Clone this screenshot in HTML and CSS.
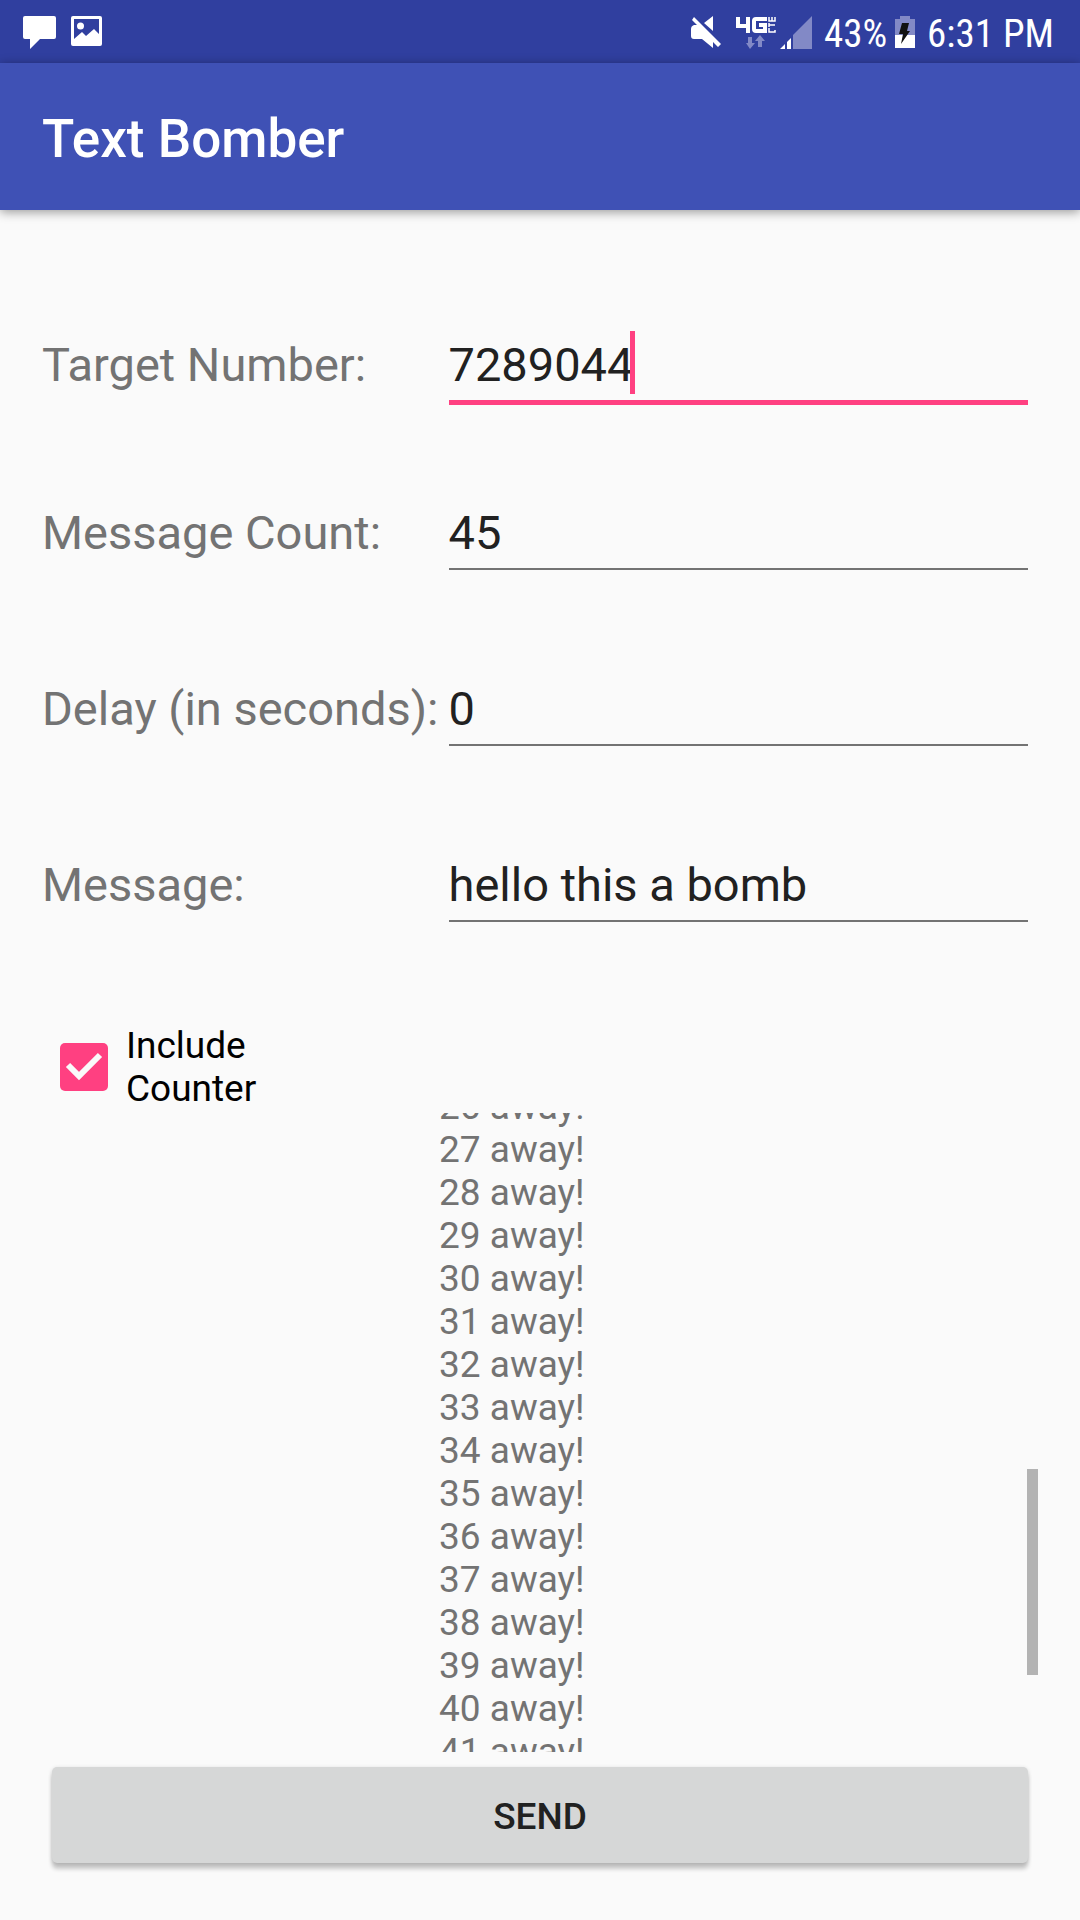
FILE: index.html
```html
<!DOCTYPE html>
<html lang="en">
<head>
<meta charset="utf-8">
<meta name="viewport" content="width=device-width, initial-scale=1">
<title>Text Bomber</title>
<link rel="stylesheet" href="styles.css">
</head>
<body>
<div class="status-bar">
  <div class="status-group notifications">
    <svg class="icon-chat" width="33" height="33" viewBox="0 0 33 33" aria-hidden="true"><path fill="#fff" d="M2 0h29q2 0 2 2v19q0 2-2 2H17L7 33V23H2q-2 0-2-2V2q0-2 2-2z"/></svg>
    <svg class="icon-image" width="31" height="33" viewBox="0 0 31 33" aria-hidden="true"><path fill="#fff" fill-rule="evenodd" d="M2 0h27q2 0 2 2v26q0 2-2 2H2q-2 0-2-2V2q0-2 2-2zM3 3v20l8-7 4 4 8-7 5 5V3z"/><circle cx="9.500" cy="10" r="3.500" fill="#fff"/></svg>
  </div>
  <div class="status-group system">
    <svg class="icon-mute" width="31" height="33" viewBox="0 0 31 33" aria-hidden="true"><path fill="#fff" d="M22 0v15L13 7zM3 1l27 27-3 3-5-5v6L11 23H3q-3 0-3-3v-7q0-3 3-4h3L1 4z"/></svg>
    <svg class="icon-network" width="40" height="33" viewBox="0 0 40 33" aria-hidden="true"><path fill="none" stroke="#fff" stroke-width="4" d="M2 1v9h12M12 1v16M31 3H20q-2 0-2 2v8q0 2 2 2h9V9h-6"/><path fill="none" stroke="#fff" stroke-width="1.500" d="M33 12v4h6v-2M33 9h6M33 7v4M33 1v4h6V1M36 1v4"/><path fill="#8289c6" d="M12 21h4v6h3l-5 6-4-6h2zM24 19l5 6h-3v6h-4v-6h-3z"/></svg>
    <svg class="icon-signal" width="32" height="33" viewBox="0 0 32 33" aria-hidden="true"><path fill="#8289c6" d="M13 19L32 0v33H13z"/><path fill="#fff" d="M0 33l5-5v5zM7 26l4-4v11H7z"/></svg>
    <span class="status-text battery-level">43%</span>
    <svg class="icon-battery" width="20" height="33" viewBox="0 0 20 33" aria-hidden="true"><path fill="#8289c6" d="M0 3h5V0h10v3h5v16H0z"/><path fill="#fff" d="M0 19h20v13H0z"/><path fill="#111" d="M7 7h7l-2 8h3L6 28l2-10H4z"/></svg>
    <time class="status-text">6:31 PM</time>
  </div>
</div>
<header class="app-bar">
  <h1 class="app-title">Text Bomber</h1>
</header>
<main class="content">
  <form class="form">
    <div class="fields">
      <label class="field-label" for="target">Target Number:</label>
      <div class="field field-focused">
        <input class="field-input" id="target" type="text" inputmode="tel" value="7289044">
        <span class="caret"></span>
      </div>
      <label class="field-label" for="count">Message Count:</label>
      <div class="field"><input class="field-input" id="count" type="text" inputmode="numeric" value="45"></div>
      <label class="field-label" for="delay">Delay (in seconds):</label>
      <div class="field"><input class="field-input" id="delay" type="text" inputmode="numeric" value="0"></div>
      <label class="field-label" for="message">Message:</label>
      <div class="field"><input class="field-input" id="message" type="text" value="hello this a bomb"></div>
    </div>
    <div class="option">
      <span class="check">
        <input class="check-box" id="counter" type="checkbox" checked>
        <svg class="check-mark" width="48" height="48" viewBox="0 0 48 48" aria-hidden="true"><path fill="none" stroke="#fafafa" stroke-width="6" d="M8 22l11 11 21-21"/></svg>
      </span>
      <label class="option-label" for="counter">Include Counter</label>
    </div>
    <div class="log">
      <ul class="log-list">
        <li>26 away!</li>
        <li>27 away!</li>
        <li>28 away!</li>
        <li>29 away!</li>
        <li>30 away!</li>
        <li>31 away!</li>
        <li>32 away!</li>
        <li>33 away!</li>
        <li>34 away!</li>
        <li>35 away!</li>
        <li>36 away!</li>
        <li>37 away!</li>
        <li>38 away!</li>
        <li>39 away!</li>
        <li>40 away!</li>
        <li>41 away!</li>
      </ul>
      <span class="scroll-thumb"></span>
    </div>
    <button class="send" type="button">SEND</button>
  </form>
</main>
</body>
</html>
```
FILE: styles.css
```css
* {
  box-sizing: border-box;
}

body {
  margin: 0;
  height: 100vh;
  display: flex;
  flex-direction: column;
  background: #fafafa;
  color: #212121;
  font-family: Roboto, "Liberation Sans", sans-serif;
}

.status-bar {
  flex: none;
  display: flex;
  justify-content: space-between;
  height: 63px;
  padding: 2px 26px 0 23px;
  background: #303f9f;
  color: #fff;
}

.status-group {
  display: flex;
  align-items: center;
}

.notifications {
  gap: 15px;
}

.icon-network {
  margin-left: 14px;
}

.icon-signal {
  margin-left: 4px;
}

.status-text {
  margin-left: 12px;
  padding-top: 2px;
  font-family: "Roboto Condensed", "Liberation Sans Narrow", Roboto, sans-serif;
  font-size: 39px;
  line-height: 56px;
}

.icon-battery {
  margin-left: 8px;
}

.app-bar {
  flex: none;
  display: flex;
  align-items: center;
  height: 147px;
  padding: 4px 42px 0;
  background: #3f51b5;
  color: #fff;
  box-shadow: 0 2px 10px rgba(0, 0, 0, 0.4);
}

.app-title {
  margin: 0;
  font-size: 53px;
  font-weight: 500;
  line-height: 62px;
}

.content {
  flex: 1;
  min-height: 0;
  display: flex;
  padding: 86px 42px 57px;
}

.form {
  flex: 1;
  min-width: 0;
  display: flex;
  flex-direction: column;
}

.fields {
  display: grid;
  grid-template-columns: max-content 1fr;
  grid-template-rows: 168px;
  grid-auto-rows: 176px;
  column-gap: 10px;
  padding-right: 10px;
}

.field-label {
  padding-top: 41px;
  color: #737373;
  font-size: 47px;
  line-height: 56px;
}

.field {
  position: relative;
  padding-top: 32px;
}

.field-input {
  display: block;
  width: 100%;
  height: 74px;
  padding: 8px 0;
  border: 0;
  border-bottom: 2px solid #737373;
  border-radius: 0;
  outline: 0;
  background: none;
  color: #212121;
  font: 47px/56px Roboto, "Liberation Sans", sans-serif;
}

.field-focused .field-input {
  height: 77px;
  border-bottom: 5px solid #ff4081;
}

.caret {
  position: absolute;
  left: 181px;
  top: 35px;
  width: 5px;
  height: 63px;
  background: #ff4081;
}

.option {
  display: flex;
  align-items: center;
  gap: 18px;
  width: 220px;
  height: 86px;
  margin: 32px 0 3px;
  padding-left: 18px;
}

.check {
  position: relative;
  flex: none;
  width: 48px;
  height: 48px;
}

.check-box {
  appearance: none;
  display: block;
  width: 48px;
  height: 48px;
  margin: 0;
  border-radius: 5px;
  background: #ff4081;
}

.check-mark {
  position: absolute;
  inset: 0;
  pointer-events: none;
}

.option-label {
  color: #000;
  font-size: 37px;
  line-height: 43px;
}

.log {
  position: relative;
  flex: 1;
  min-height: 0;
  overflow: hidden;
}

.log-list {
  width: max-content;
  margin: -28px 0 0 397px;
  padding: 0;
  list-style: none;
  color: #737373;
  font-size: 37px;
  line-height: 43px;
}

.scroll-thumb {
  position: absolute;
  right: 0;
  top: 356px;
  width: 11px;
  height: 206px;
  background: #b3b3b3;
}

.send {
  flex: none;
  height: 96px;
  margin: 15px 10px 0;
  padding: 2px 0 0;
  border: 0;
  border-radius: 5px;
  background: #d6d7d7;
  box-shadow: 0 6px 4px rgba(0, 0, 0, 0.2), 0 1px 4px rgba(0, 0, 0, 0.15);
  color: #212121;
  font: 500 37px/43px Roboto, "Liberation Sans", sans-serif;
}
```
